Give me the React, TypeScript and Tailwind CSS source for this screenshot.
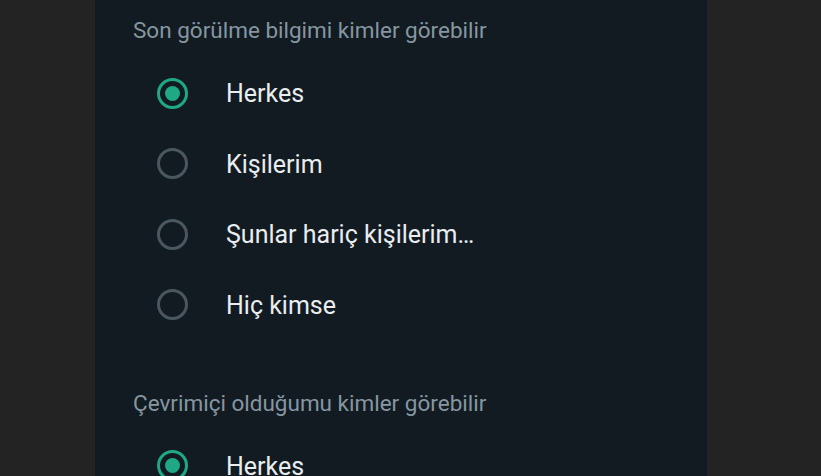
import React from "react";

const Radio = ({ checked }: { checked: boolean }) =>
  checked ? (
    <div className="w-[31px] h-[31px] rounded-full border-[3px] border-[#1fa885] flex items-center justify-center shrink-0">
      <div className="w-[15px] h-[15px] rounded-full bg-[#1fa885]" />
    </div>
  ) : (
    <div className="w-[31px] h-[31px] rounded-full border-[3px] border-[#4a575f] shrink-0" />
  );

const Row = ({ label, checked }: { label: string; checked: boolean }) => (
  <div className="h-[70.5px] flex items-center pl-[62px]">
    <Radio checked={checked} />
    <span className="ml-[38px] mt-[2px] text-[25px] leading-[30px] text-[#e9edef]">{label}</span>
  </div>
);

const Heading = ({ children }: { children: React.ReactNode }) => (
  <div className="pl-[38px] text-[22.5px] leading-[26px] text-[#8696a0]">{children}</div>
);

export default function App() {
  return (
    <div
      className="w-[821px] h-[476px] overflow-hidden bg-[#232323] flex pl-[95px]"
      style={{ fontFamily: "Roboto, 'Noto Sans', sans-serif" }}
    >
      <div className="w-[612px] h-full bg-[#121b22] flex flex-col">
        <div className="pt-[17px]">
          <Heading>Son görülme bilgimi kimler görebilir</Heading>
          <div className="mt-[14.75px]">
            <Row label="Herkes" checked />
            <Row label="Kişilerim" checked={false} />
            <Row label="Şunlar hariç kişilerim…" checked={false} />
            <Row label="Hiç kimse" checked={false} />
          </div>
        </div>
        <div className="mt-[11px] h-px bg-[#1c272f]" />
        <div className="pt-[39px]">
          <Heading>Çevrimiçi olduğumu kimler görebilir</Heading>
          <div className="mt-[14.75px]">
            <Row label="Herkes" checked />
          </div>
        </div>
      </div>
    </div>
  );
}
